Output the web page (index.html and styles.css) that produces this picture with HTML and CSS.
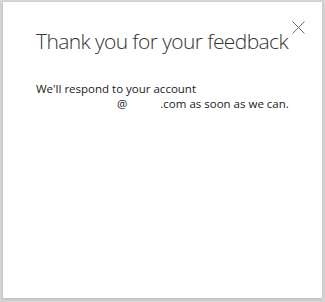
FILE: index.html
```html
<!DOCTYPE html>
<html>
<head>
<meta charset="utf-8">
<link rel="stylesheet" href="styles.css">
</head>
<body>
<div class="dialog">
  <button class="close" aria-label="Close">
    <svg width="13" height="13" viewBox="0 0 13 13"><path d="M0.5 0.5 L12.5 12.5 M12.5 0.5 L0.5 12.5" stroke="#6d6d6d" stroke-width="1" fill="none"/></svg>
  </button>
  <h1 class="title">Thank you for your feedback</h1>
  <p class="message">We'll respond to your account<br><span class="redact r1"></span>@<span class="redact r2"></span>.com as soon as we can.</p>
</div>
</body>
</html>
```
FILE: styles.css
```css
html, body {
  margin: 0;
  padding: 0;
  width: 325px;
  height: 302px;
  overflow: hidden;
  background: #d6d6d6;
}
body {
  padding: 2px 3px 4px 3px;
  box-sizing: border-box;
  font-family: "Open Sans", "Noto Sans", sans-serif;
}
.dialog {
  position: relative;
  background: #ffffff;
  height: 100%;
  box-sizing: border-box;
  padding: 25px 20px 0 33px;
  box-shadow: 0 1px 3px rgba(0,0,0,0.15);
}
.close {
  position: absolute;
  top: 19px;
  right: 17px;
  border: 0;
  background: none;
  padding: 0;
  width: 13px;
  height: 13px;
  display: block;
}
.close svg { display: block; }
.title {
  margin: 0;
  font-weight: 300;
  font-size: 21px;
  letter-spacing: -0.6px;
  line-height: 28px;
  color: #333333;
  white-space: nowrap;
}
.message {
  margin: 26px 0 0 0;
  font-size: 11.5px;
  line-height: 15px;
  color: #1a1a1a;
  white-space: nowrap;
}
.redact {
  display: inline-block;
  height: 1px;
}
.r1 { width: 81px; }
.r2 { width: 33px; }
```
